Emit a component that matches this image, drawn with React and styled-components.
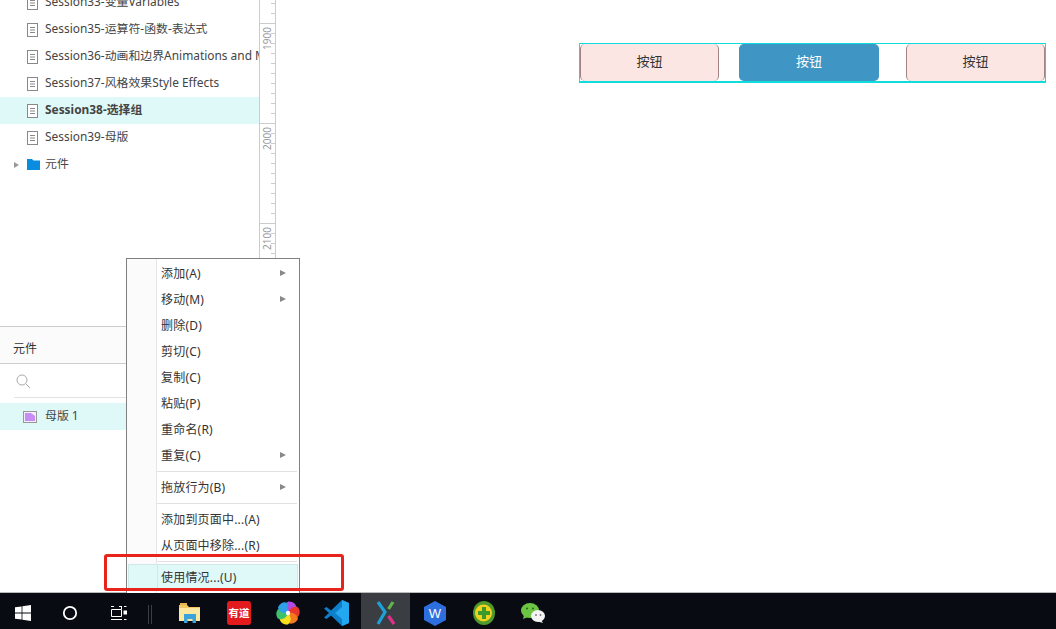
import React from "react";
import styled, { createGlobalStyle } from "styled-components";

const GlobalStyle = createGlobalStyle`
  * {
    box-sizing: border-box;
  }
  html, body {
    margin: 0;
    padding: 0;
    background: #fff;
    overflow: hidden;
  }
  body {
    font-family: "Noto Sans", "Noto Sans CJK SC", sans-serif;
    color: #333;
  }
`;

const sessions = [
  { name: "Session33-变量Variables" },
  { name: "Session35-运算符-函数-表达式" },
  { name: "Session36-动画和边界Animations and M" },
  { name: "Session37-风格效果Style Effects" },
  { name: "Session38-选择组", active: true },
  { name: "Session39-母版" },
];

const rulerMarks = [1900, 2000, 2100];

const menuGroups = [
  [
    { label: "添加(A)", sub: true },
    { label: "移动(M)", sub: true },
    { label: "删除(D)" },
    { label: "剪切(C)" },
    { label: "复制(C)" },
    { label: "粘贴(P)" },
    { label: "重命名(R)" },
    { label: "重复(C)", sub: true },
  ],
  [{ label: "拖放行为(B)", sub: true }],
  [{ label: "添加到页面中...(A)" }, { label: "从页面中移除...(R)" }],
  [{ label: "使用情况...(U)", hover: true }],
];

function DocIcon() {
  return (
    <svg width="12" height="14" viewBox="0 0 12 14">
      <rect x="0.5" y="0.5" width="10" height="13" fill="#fff" stroke="#888" />
      <path d="M3 4.500h5M3 7h5M3 9.500h5" stroke="#888" strokeWidth="1" />
    </svg>
  );
}

function FolderIcon() {
  return (
    <svg width="13" height="11" viewBox="0 0 13 11">
      <path d="M0 0h5l1.500 1.500H13V11H0z" fill="#0a8ce0" />
    </svg>
  );
}

function MasterIcon() {
  return (
    <svg width="14" height="12" viewBox="0 0 14 12">
      <rect x="0.5" y="0.5" width="13" height="11" fill="#f4eefb" stroke="#999" />
      <path d="M2 2h6l4 3v5H2z" fill="#c88cf5" />
    </svg>
  );
}

function SearchIcon() {
  return (
    <svg width="15" height="15" viewBox="0 0 15 15" fill="none">
      <circle cx="6" cy="6" r="5" stroke="#aaa" />
      <path d="M9.800 9.800 14 14" stroke="#aaa" />
    </svg>
  );
}

function WinLogo() {
  return (
    <svg width="16" height="16" viewBox="0 0 16 16">
      <path d="M0 2.300 6.600 1.400v6.200H0zM7.400 1.300 16 0v7.600H7.400zM0 8.400h6.600v6.200L0 13.700zM7.400 8.400H16V16l-8.600-1.300z" fill="#fff" />
    </svg>
  );
}

function CortanaIcon() {
  return (
    <svg width="16" height="16" viewBox="0 0 16 16" fill="none">
      <circle cx="8" cy="8" r="6.200" stroke="#fff" strokeWidth="1.800" />
    </svg>
  );
}

function TaskViewIcon() {
  return (
    <svg width="17" height="16" viewBox="0 0 17 16" fill="none" stroke="#fff" strokeWidth="1">
      <path d="M1.500 4.500h10v7h-10z" />
      <path d="M1 1.500h3M9 1.500h3M11.500 1v3M1 14.500h11" />
      <path d="M14 1.500h2.500M14 14.500h2.500" />
      <rect x="14" y="6" width="2.500" height="3" fill="#fff" />
    </svg>
  );
}

function ExplorerIcon() {
  return (
    <svg width="22" height="20" viewBox="0 0 22 20">
      <path d="M0 2h8l2 2h11v14H0z" fill="#f2c760" />
      <path d="M0 5h21v13H0z" fill="#fde8a2" />
      <path d="M1 0h7v2H1z" fill="#e0b552" />
      <path d="M5 11h12v9h-3.500v-4h-5v4H5z" fill="#3aa3dc" />
    </svg>
  );
}

function YoudaoIcon() {
  return (
    <svg width="24" height="24" viewBox="0 0 24 24">
      <rect width="24" height="24" rx="3" fill="#e31b1f" />
      <text x="12" y="16" textAnchor="middle" fontSize="10.500" fontWeight="700" fill="#fff" fontFamily="Noto Sans CJK SC, sans-serif">有道</text>
    </svg>
  );
}

function PinwheelIcon() {
  const petals = ["#b04be8", "#e8372c", "#f47a1f", "#f7df1e", "#3fc06a", "#2f9fe8"];
  return (
    <svg width="24" height="24" viewBox="0 0 24 24">
      {petals.map((color, i) => (
        <path
          key={color}
          d="M12 12C9 9 8 4 12 .5 17 0 20 3 20.500 6.500z"
          fill={color}
          transform={`rotate(${i * 60} 12 12)`}
        />
      ))}
      <circle cx="12" cy="12" r="2.200" fill="#fff" />
    </svg>
  );
}

function VscodeIcon() {
  return (
    <svg width="25" height="26" viewBox="0 0 25 26">
      <path d="M18 0 25 3v20l-7 3L7 15.500 2.500 19 0 17.500 5 13 0 8.500 2.500 7 7 10.500z" fill="#0e7fcb" />
      <path d="M18 0 25 3v20l-7 3zM18 7l-7 6 7 6z" fill="#22a7f0" fillRule="evenodd" />
    </svg>
  );
}

function AxureIcon() {
  return (
    <svg width="20" height="26" viewBox="0 0 20 26" fill="none" strokeWidth="3.200">
      <path d="M2 2 9 12 2 24" stroke="#1da1d8" />
      <path d="M17 2 12.500 9" stroke="#5fb54a" />
      <path d="M12.500 16 18 24" stroke="#e0308c" />
    </svg>
  );
}

function WpsIcon() {
  return (
    <svg width="22" height="25" viewBox="0 0 22 25">
      <path d="M11 0 22 6v13l-11 6L0 19V6z" fill="#2e6fe0" />
      <text x="11" y="17" textAnchor="middle" fontSize="13" fill="#fff" fontFamily="Liberation Sans, sans-serif">W</text>
    </svg>
  );
}

function SafeIcon() {
  return (
    <svg width="22" height="24" viewBox="0 0 22 24">
      <ellipse cx="11" cy="12" rx="11" ry="12" fill="#4f9a2c" />
      <circle cx="10.500" cy="12" r="8.500" fill="#f2d21e" />
      <path d="M9 6h4v4h4v4h-4v4H9v-4H5v-4h4z" fill="#3a9a2a" />
    </svg>
  );
}

function WechatIcon() {
  return (
    <svg width="24" height="21" viewBox="0 0 24 21">
      <ellipse cx="9" cy="7.500" rx="9" ry="7.500" fill="#6cc644" />
      <path d="M3 12l-1 4 5-2z" fill="#6cc644" />
      <ellipse cx="17" cy="13" rx="7" ry="6" fill="#f4f4f4" />
      <path d="M20 17l2 3-5-1.500z" fill="#f4f4f4" />
      <circle cx="6" cy="5.500" r="1.100" fill="#2a6e1c" />
      <circle cx="12" cy="5.500" r="1.100" fill="#2a6e1c" />
      <circle cx="15" cy="12" r="0.900" fill="#777" />
      <circle cx="19.500" cy="12" r="0.900" fill="#777" />
    </svg>
  );
}

const taskApps = [
  { id: "explorer", icon: <ExplorerIcon /> },
  { id: "youdao", icon: <YoudaoIcon /> },
  { id: "photos", icon: <PinwheelIcon /> },
  { id: "vscode", icon: <VscodeIcon /> },
  { id: "axure", icon: <AxureIcon />, active: true },
  { id: "wps", icon: <WpsIcon /> },
  { id: "safe", icon: <SafeIcon /> },
  { id: "wechat", icon: <WechatIcon /> },
];

export default function App() {
  return (
    <>
      <GlobalStyle />
      <Screen>
        <Workspace>
          <Sidebar>
            <TreePanel>
              {sessions.map((s) => (
                <TreeRow key={s.name} $active={s.active}>
                  <DocIcon />
                  <TreeLabel $active={s.active}>{s.name}</TreeLabel>
                </TreeRow>
              ))}
              <FolderRow>
                <Caret />
                <FolderIcon />
                <TreeLabel>元件</TreeLabel>
              </FolderRow>
            </TreePanel>
            <PanelHeader>元件</PanelHeader>
            <SearchBar>
              <SearchIcon />
            </SearchBar>
            <MasterRow>
              <MasterIcon />
              <TreeLabel>母版 1</TreeLabel>
            </MasterRow>
          </Sidebar>

          <Ruler>
            <RulerLead />
            {rulerMarks.map((mark) => (
              <RulerSegment key={mark}>
                <RulerLabel>{mark}</RulerLabel>
              </RulerSegment>
            ))}
          </Ruler>

          <Canvas>
            <SelectionGroup>
              <WidgetButton>按钮</WidgetButton>
              <WidgetButton $selected>按钮</WidgetButton>
              <WidgetButton>按钮</WidgetButton>
            </SelectionGroup>
          </Canvas>
        </Workspace>

        <Taskbar>
          <SystemButton $width={46}><WinLogo /></SystemButton>
          <SystemButton $width={48}><CortanaIcon /></SystemButton>
          <SystemButton $width={48}><TaskViewIcon /></SystemButton>
          <TaskDivider />
          {taskApps.map((app) => (
            <TaskApp key={app.id} $active={app.active}>{app.icon}</TaskApp>
          ))}
        </Taskbar>

        <ContextMenu>
          {menuGroups.map((group, i) => (
            <MenuGroup key={i} $first={i === 0}>
              {group.map((item) => (
                <MenuItem key={item.label} $hover={item.hover}>
                  <MenuText>{item.label}</MenuText>
                  {item.sub && <SubArrow />}
                </MenuItem>
              ))}
            </MenuGroup>
          ))}
        </ContextMenu>
        <Callout />
      </Screen>
    </>
  );
}

const Screen = styled.div`
  position: relative;
  width: 1056px;
  height: 629px;
  display: flex;
  flex-direction: column;
  overflow: hidden;
  background: #fff;
`;

const Workspace = styled.div`
  flex: 1;
  min-height: 0;
  display: flex;
  border-bottom: 1px solid #bbb;
`;

const Sidebar = styled.div`
  width: 259px;
  display: flex;
  flex-direction: column;
  overflow: hidden;
`;

const TreePanel = styled.div`
  flex-shrink: 0;
  margin-top: -11px;
  height: 338px;
  border-bottom: 1px solid #ccc;
`;

const TreeRow = styled.div`
  height: 27px;
  display: flex;
  align-items: center;
  gap: 6px;
  padding-left: 27px;
  background: ${({ $active }) => ($active ? "#dff9f9" : "transparent")};
  white-space: nowrap;
  overflow: hidden;

  svg {
    flex-shrink: 0;
  }
`;

const FolderRow = styled(TreeRow)`
  padding-left: 14px;
  gap: 5px;
`;

const TreeLabel = styled.span`
  font-size: 11.9px;
  line-height: 16px;
  padding-bottom: 4px;
  font-weight: ${({ $active }) => ($active ? 700 : 400)};
  color: #444;
`;

const Caret = styled.span`
  width: 0;
  height: 0;
  margin-right: 3px;
  border-left: 5px solid #999;
  border-top: 3.500px solid transparent;
  border-bottom: 3.500px solid transparent;
`;

const PanelHeader = styled.div`
  height: 37px;
  flex-shrink: 0;
  display: flex;
  align-items: center;
  padding: 6px 0 0 13px;
  font-size: 12px;
  background: #fbfbfb;
  border-bottom: 1px solid #ccc;
`;

const SearchBar = styled.div`
  height: 34px;
  flex-shrink: 0;
  margin-left: 14px;
  padding: 8px 0 0 2px;
  border-bottom: 1px solid #e2e2e2;
`;

const MasterRow = styled.div`
  height: 27px;
  flex-shrink: 0;
  margin-top: 5px;
  display: flex;
  align-items: center;
  gap: 8px;
  padding-left: 23px;
  background: #dff9f9;
`;

const Ruler = styled.div`
  width: 17px;
  flex-shrink: 0;
  overflow: hidden;
  border-left: 1px solid #ccc;
  border-right: 1px solid #ccc;
`;

const RulerLead = styled.div`
  height: 23px;
  background: linear-gradient(to bottom, transparent 3px, #ccc 3px 4px, transparent 4px 13px, #ccc 13px 14px, transparent 14px) no-repeat right top / 4px 100%;
`;

const RulerSegment = styled.div`
  height: 100px;
  border-top: 1px solid #ccc;
  background: repeating-linear-gradient(to bottom, transparent 0 9px, #ccc 9px 10px) no-repeat right top / 4px 100%;
`;

const RulerLabel = styled.span`
  display: block;
  margin: 3px 0 0 1px;
  width: 12px;
  writing-mode: vertical-rl;
  transform: rotate(180deg);
  font-size: 10px;
  line-height: 12px;
  color: #999;
`;

const Canvas = styled.div`
  flex: 1;
  padding: 43px 10px 0 303px;
  background: #fff;
`;

const SelectionGroup = styled.div`
  height: 40px;
  display: flex;
  justify-content: space-between;
  border-style: solid;
  border-color: #0fdcdc;
  border-width: 1px 1px 2px;
`;

const WidgetButton = styled.div`
  width: 139px;
  display: flex;
  align-items: center;
  justify-content: center;
  padding-bottom: 4px;
  font-size: 13px;
  border-radius: 5px;
  color: ${({ $selected }) => ($selected ? "#fff" : "#333")};
  background: ${({ $selected }) => ($selected ? "#3f96c4" : "#fbe6e4")};
  border-style: solid;
  border-width: 0 1px;
  border-color: ${({ $selected }) => ($selected ? "#3f96c4" : "#a08484")};

  &:nth-child(2) {
    width: 140px;
    margin-left: 20px;
    margin-right: 27px;
  }
`;

const Taskbar = styled.div`
  height: 36px;
  flex-shrink: 0;
  display: flex;
  background: #080c12;
`;

const SystemButton = styled.div`
  width: ${({ $width }) => $width}px;
  padding-top: 4px;
  display: flex;
  align-items: center;
  justify-content: center;
`;

const TaskDivider = styled.div`
  width: 23px;
  margin: 12px 0 5px;
  background: linear-gradient(to right, transparent 6px, #3a3f45 6px 7px, transparent 7px 9px, #3a3f45 9px 10px, transparent 10px);
`;

const TaskApp = styled.div`
  width: 49px;
  padding-top: 4px;
  display: flex;
  align-items: center;
  justify-content: center;
  background: ${({ $active }) => ($active ? "#3a3d42" : "transparent")};
`;

const ContextMenu = styled.div`
  position: absolute;
  left: 126px;
  top: 258px;
  width: 174px;
  height: 335px;
  padding: 1px;
  background: linear-gradient(to right, #fbfbfb 29px, #e6e6e6 29px 30px, #fff 30px);
  border: 1px solid #808080;
  border-bottom: none;
`;

const MenuGroup = styled.div`
  ${({ $first }) =>
    !$first &&
    `
    margin-top: 6px;
    position: relative;
    &::before {
      content: "";
      position: absolute;
      left: 29px;
      right: 1px;
      top: -3px;
      height: 1px;
      background: #e2e2e2;
    }
  `}
`;

const MenuItem = styled.div`
  height: 26px;
  display: flex;
  align-items: center;
  padding-left: 33px;
  position: relative;
  background: ${({ $hover }) =>
    $hover
      ? "linear-gradient(to right, #dff9f9 29px, #d2e8e8 29px 30px, #dff9f9 30px)"
      : "transparent"};
  box-shadow: ${({ $hover }) => ($hover ? "inset 0 0 0 1px #d2e8e8" : "none")};
`;

const MenuText = styled.span`
  font-size: 12px;
  letter-spacing: 0.2px;
  color: #333;
`;

const SubArrow = styled.span`
  position: absolute;
  right: 12px;
  top: 10px;
  width: 0;
  height: 0;
  border-left: 6px solid #888;
  border-top: 3.500px solid transparent;
  border-bottom: 3.500px solid transparent;
`;

const Callout = styled.div`
  position: absolute;
  left: 104px;
  top: 554px;
  width: 240px;
  height: 37px;
  border: 3px solid #e8231c;
  border-radius: 3px;
`;
